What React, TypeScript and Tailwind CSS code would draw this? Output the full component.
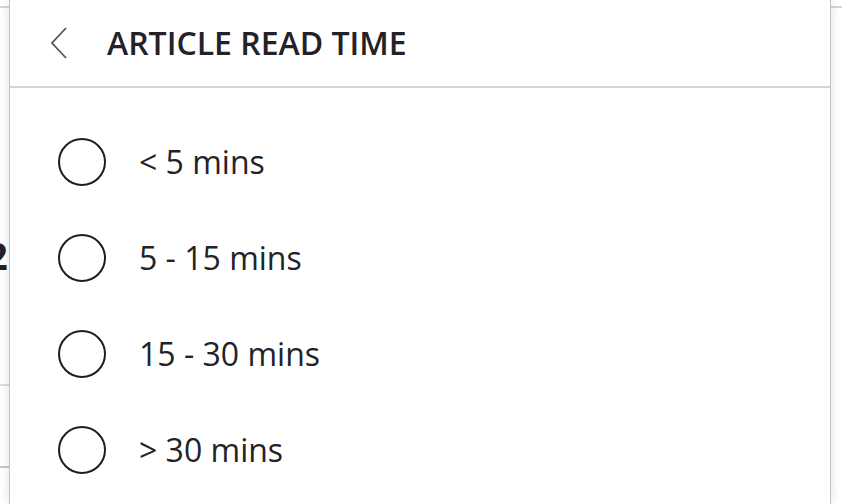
import React from 'react';

const options = ['< 5 mins', '5 - 15 mins', '15 - 30 mins', '> 30 mins'];

const App: React.FC = () => {
    return (
        <div
            className="relative w-[842px] h-[504px] overflow-hidden bg-white"
            style={{ fontFamily: '"Open Sans", "Noto Sans", sans-serif' }}
        >
            {/* page behind the panel */}
            <div className="absolute inset-0">
                <div className="absolute left-0 top-[6px] w-full h-[2px] bg-[#d6d6d6]" />
                <div className="absolute left-0 top-[384px] w-[20px] h-[2px] bg-[#dcdcdc]" />
                <div className="absolute left-0 top-[466px] w-[20px] h-[2px] bg-[#c8c8c8]" />
                <span className="absolute left-[-14px] top-[236px] text-[38px] font-bold leading-none text-[#222]">2</span>
            </div>

            {/* panel */}
            <div className="absolute left-[9px] top-0 w-[822px] h-[504px] bg-white border-x border-[#c4c4c4] shadow-[0_0_10px_rgba(0,0,0,0.12)] flex flex-col">
                <div className="h-[88px] flex items-center border-b-2 border-[#d4d4d4] shrink-0">
                    <button className="ml-[38px] w-[22px] h-[32px] flex items-center justify-center text-[#555]" aria-label="Back">
                        <svg width="18" height="32" viewBox="0 0 18 32" fill="none" stroke="currentColor" strokeWidth="1.8">
                            <path d="M16 1 L2 16 L16 31" />
                        </svg>
                    </button>
                    <h1 className="ml-[37px] text-[32px] font-semibold text-[#222228] leading-none">ARTICLE READ TIME</h1>
                </div>
                <ul className="flex flex-col pt-[26px]">
                    {options.map((o) => (
                        <li key={o} className="h-[96px] flex items-center">
                            <span className="ml-[48px] w-[48px] h-[48px] rounded-full border-2 border-[#1e1e1e] shrink-0" />
                            <span className="ml-[33px] text-[32px] text-[#222228] leading-none">{o}</span>
                        </li>
                    ))}
                </ul>
            </div>
        </div>
    );
};

export default App;
